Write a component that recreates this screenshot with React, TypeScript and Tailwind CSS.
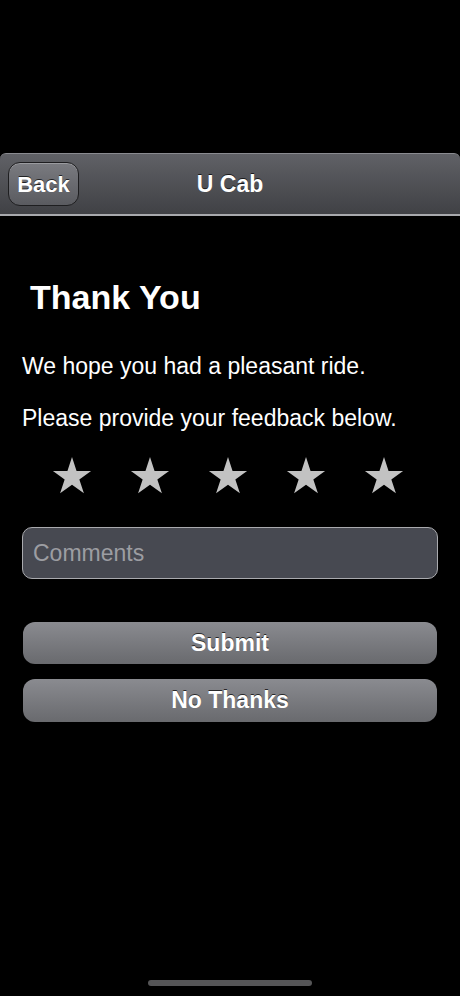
import React from "react";

function Star() {
  return (
    <svg width="42" height="42" viewBox="0 0 24 24">
      <path d="M12 1.2l2.6 7.9h8.3l-6.7 4.9 2.6 7.9L12 17l-6.8 4.9 2.6-7.9L1.1 9.1h8.3z" fill="#c2c2c2" />
    </svg>
  );
}

export default function App() {
  const font = { fontFamily: '"Liberation Sans", Arial, sans-serif' };
  return (
    <div className="w-[460px] h-[996px] bg-black flex flex-col text-white relative overflow-hidden" style={font}>
      <div className="h-[153px]" />
      <div className="h-[63px] mx-0 rounded-t-[6px] border-t border-[#8a8b90] border-b-2 border-b-[#a8a9ad] bg-gradient-to-b from-[#606166] to-[#404145] flex items-center relative">
        <div className="ml-2 w-[71px] h-[44px] rounded-[12px] border border-[#1e1e20] bg-gradient-to-b from-[#7a7b80] to-[#5a5b60] flex items-center justify-center shadow-[inset_0_1px_0_rgba(255,255,255,0.25)]">
          <span className="text-[22px] font-bold text-white [text-shadow:0_-1px_0_rgba(0,0,0,0.7)]">Back</span>
        </div>
        <div className="absolute inset-0 flex items-center justify-center pointer-events-none">
          <span className="text-[23px] font-bold text-white [text-shadow:0_-1px_0_rgba(0,0,0,0.7)]">U Cab</span>
        </div>
      </div>
      <div className="pt-[61px] pl-[30px]">
        <h1 className="text-[34px] font-bold leading-[40px]">Thank You</h1>
      </div>
      <p className="pl-[22px] text-[23px] leading-[26px] mt-[36px]">We hope you had a pleasant ride.</p>
      <p className="pl-[22px] text-[23px] leading-[26px] mt-[26px]">Please provide your feedback below.</p>
      <div className="flex pl-[51px] gap-[36px] mt-[24px]">
        <Star />
        <Star />
        <Star />
        <Star />
        <Star />
      </div>
      <div className="mx-[22px] mt-[30px] h-[52px] rounded-[10px] border border-[#a9aaae] bg-[#474951] flex items-center pl-[10px]">
        <span className="text-[23px] text-[#9c9da2]">Comments</span>
      </div>
      <div className="mx-[23px] mt-[43px] h-[42px] rounded-[12px] bg-gradient-to-b from-[#8a8b90] to-[#696a6e] flex items-center justify-center">
        <span className="text-[23px] font-bold text-white [text-shadow:0_-1px_0_rgba(0,0,0,0.7)]">Submit</span>
      </div>
      <div className="mx-[23px] mt-[15px] h-[43px] rounded-[12px] bg-gradient-to-b from-[#8a8b90] to-[#696a6e] flex items-center justify-center">
        <span className="text-[23px] font-bold text-white [text-shadow:0_-1px_0_rgba(0,0,0,0.7)]">No Thanks</span>
      </div>
      <div className="flex-1" />
      <div className="flex justify-center pb-[10px]">
        <div className="w-[164px] h-[6px] rounded-full bg-[#555557]" />
      </div>
    </div>
  );
}
